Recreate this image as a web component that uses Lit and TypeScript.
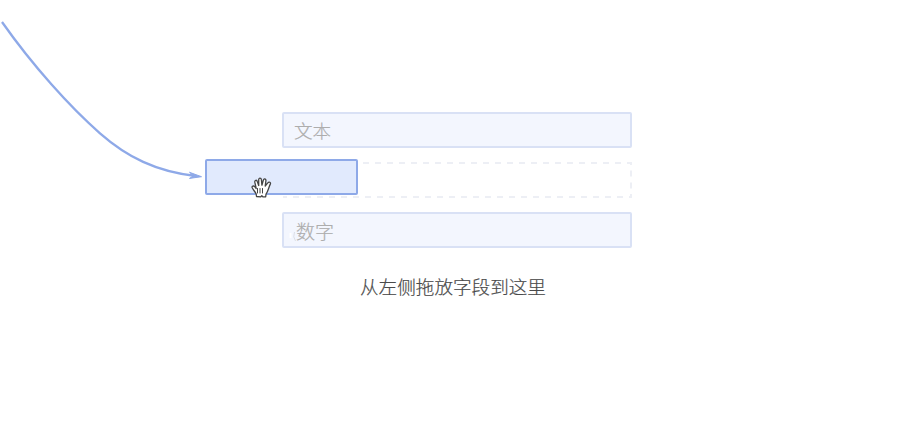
import { LitElement, html, css } from "lit";
import { customElement } from "lit/decorators.js";

@customElement("app-root")
export class AppRoot extends LitElement {
  static styles = css`
    :host {
      display: block;
      position: relative;
      width: 900px;
      height: 436px;
      overflow: hidden;
      background: #fff;
      font-family: "Noto Sans CJK SC", sans-serif;
      font-weight: 300;
      -webkit-text-stroke: 0.2px currentColor;
    }
    .canvas {
      display: flex;
      flex-direction: column;
      width: 350px;
      padding: 112px 0 0 282px;
    }
    .field {
      box-sizing: border-box;
      height: 36px;
      border: 2px solid #d9e1f5;
      border-radius: 2px;
      background: #f3f6fe;
      color: #adadad;
      font-size: 18.6px;
      line-height: 32px;
      padding-left: 10px;
    }
    .number { padding-left: 12px; line-height: 34px; font-size: 19px; }
    .slot { height: 36px; margin: 14px 0; }
    .slot svg { display: block; }
    .hint {
      margin: 23px 0 0 -8px;
      text-align: center;
      font-size: 18.6px;
      line-height: 30px;
      color: #4a4a4a;
    }
    .overlay { position: absolute; left: 0; top: 0; }
  `;

  render() {
    return html`
      <div class="canvas">
        <div class="field">文本</div>
        <div class="slot">
          <svg width="350" height="36" fill="none" stroke="#edeff5" stroke-width="2">
            <path d="M81 1H350" stroke-dasharray="6 6" />
            <path d="M349 1v2M349 8.5v6M349 20.5v6M349 32v3" />
            <path d="M1 35h4M11 35H350" stroke-dasharray="6 6" />
          </svg>
        </div>
        <div class="field number">数字</div>
        <div class="hint">从左侧拖放字段到这里</div>
      </div>
      <svg class="overlay" width="900" height="436" fill="none">
        <rect x="206" y="160" width="151" height="34" rx="1" fill="#e1eafd" stroke="#8ea9e8" stroke-width="2" />
        <path d="M2 22C33 66 70 107 100 133.300C127 157 156 171.500 196 176" stroke="#8ea9e8" stroke-width="2.3" />
        <path d="M189.500 172.300L201.500 176.700L189.500 178.400L193.500 175.800Z" fill="#8ea9e8" stroke="#8ea9e8" stroke-width="1" />
        <path d="M290.500 233v5" stroke="#fff" stroke-width="2" />
        <path d="M294.500 232Q292.500 237 295.500 241" stroke="#dcdfe6" stroke-width="1" />
        <g transform="translate(251 177)" stroke="#444" stroke-width="1.3" stroke-linejoin="round" stroke-linecap="round">
          <path fill="#fff" d="M5.500 19.500L5.200 17C4 14.500 2.200 13 1.200 10.800C.6 9 2.700 8.500 3.700 9.700L5.200 11.500L3.800 5.200C3.500 3 5.700 2.500 6.300 4.500L7.700 8.500L7.700 2.800C7.700.6 10.200.6 10.400 2.800L10.900 8.200L12.300 3.200C12.900 1.200 15.200 1.800 14.900 3.800L14.200 9L16.800 5.900C18 4.300 20.200 5.300 19.300 7.100C17.600 10.600 17 14.600 15 17.200L14.700 19.800H11.800L10.800 18.800L9.800 19.800Z" />
          <path stroke-width="1" d="M6.500 11.500V16M9 11.500V16M11.500 11.500V16" />
        </g>
      </svg>
    `;
  }
}
